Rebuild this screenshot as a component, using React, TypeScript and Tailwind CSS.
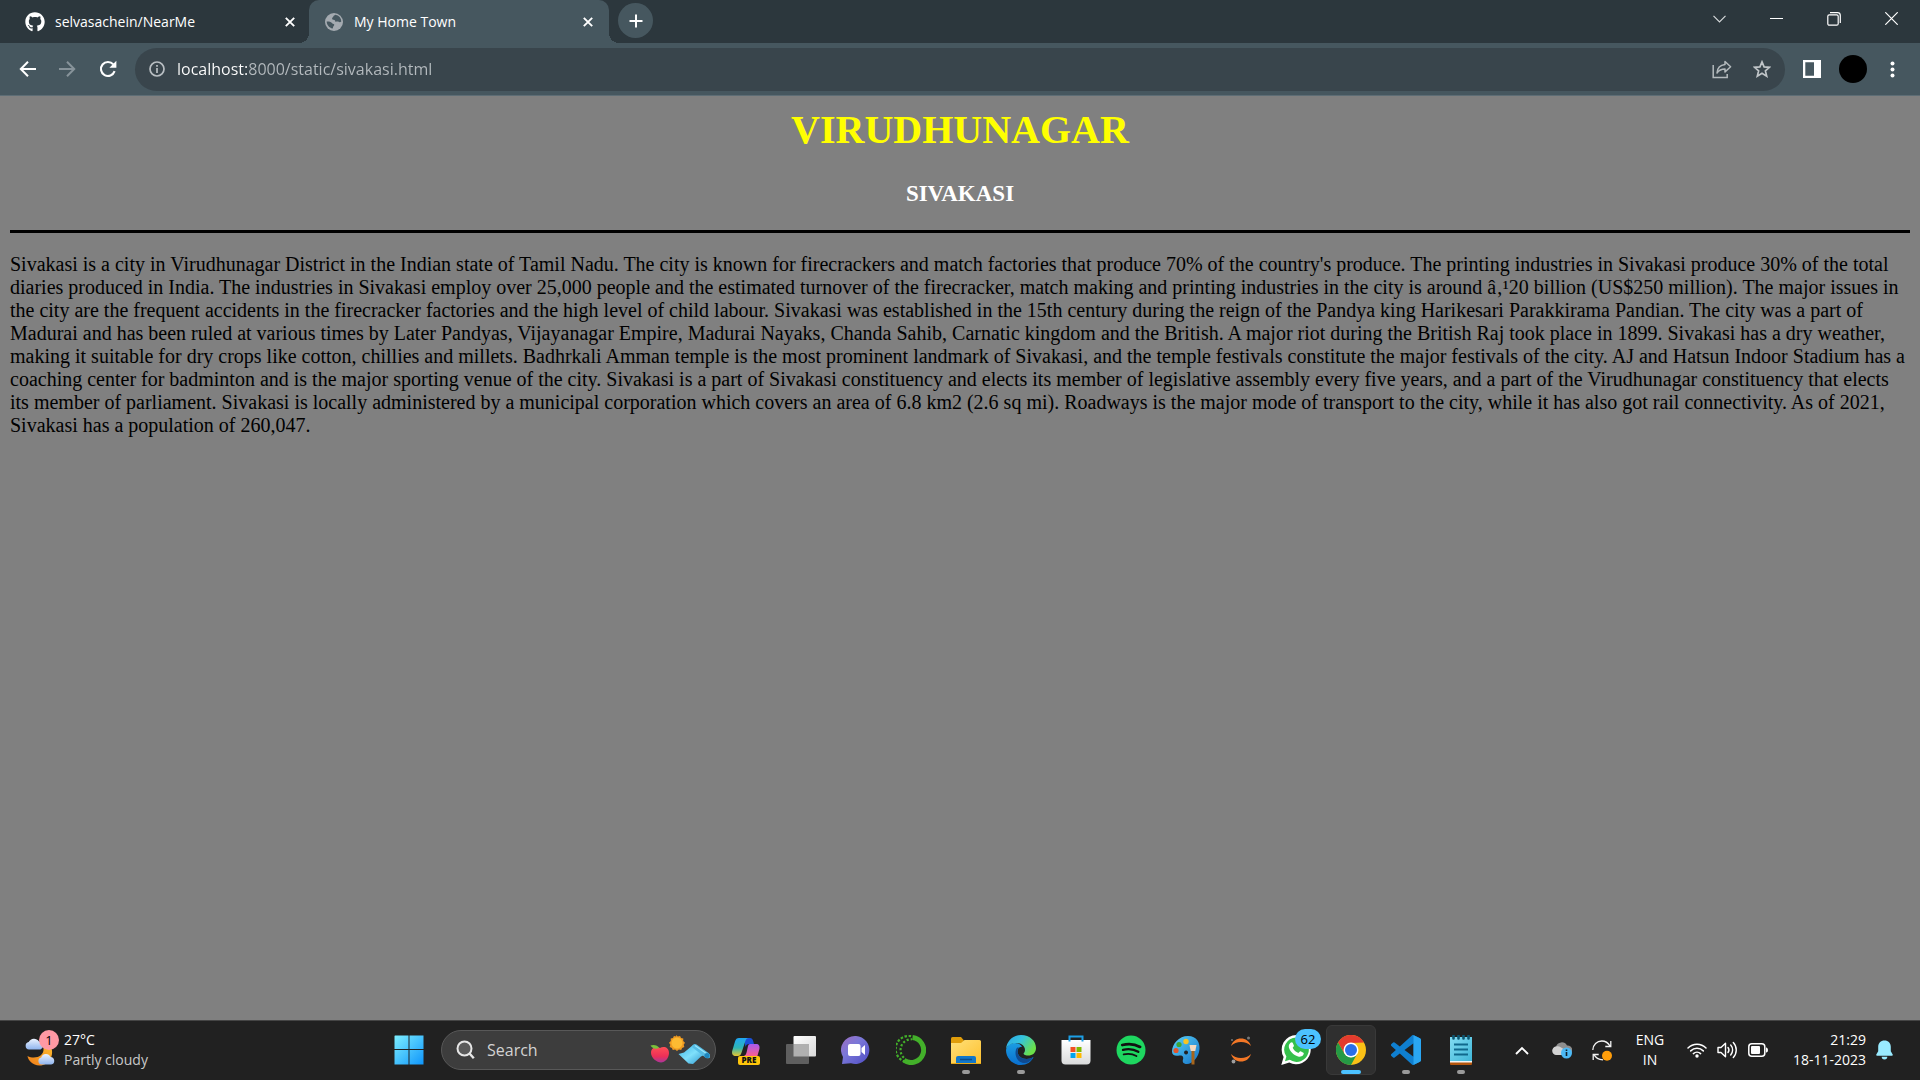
import React from "react";
import type { ReactNode } from "react";
import { FaGithub } from "react-icons/fa";

const PARAGRAPH =
  "Sivakasi is a city in Virudhunagar District in the Indian state of Tamil Nadu. The city is known for firecrackers and match factories that produce 70% of the country's produce. The printing industries in Sivakasi produce 30% of the total diaries produced in India. The industries in Sivakasi employ over 25,000 people and the estimated turnover of the firecracker, match making and printing industries in the city is around \u00e2\u201a\u00b920 billion (US$250 million). The major issues in the city are the frequent accidents in the firecracker factories and the high level of child labour. Sivakasi was established in the 15th century during the reign of the Pandya king Harikesari Parakkirama Pandian. The city was a part of Madurai and has been ruled at various times by Later Pandyas, Vijayanagar Empire, Madurai Nayaks, Chanda Sahib, Carnatic kingdom and the British. A major riot during the British Raj took place in 1899. Sivakasi has a dry weather, making it suitable for dry crops like cotton, chillies and millets. Badhrkali Amman temple is the most prominent landmark of Sivakasi, and the temple festivals constitute the major festivals of the city. AJ and Hatsun Indoor Stadium has a coaching center for badminton and is the major sporting venue of the city. Sivakasi is a part of Sivakasi constituency and elects its member of legislative assembly every five years, and a part of the Virudhunagar constituency that elects its member of parliament. Sivakasi is locally administered by a municipal corporation which covers an area of 6.8 km2 (2.6 sq mi). Roadways is the major mode of transport to the city, while it has also got rail connectivity. As of 2021, Sivakasi has a population of 260,047.";

/* ---------- Browser icons ---------- */

function CloseGlyph() {
  return (
    <svg width="10" height="10" viewBox="0 0 10 10" fill="none" stroke="#fff" strokeWidth="1.9">
      <path d="M.8.8l8.4 8.4M9.2.8L.8 9.2" />
    </svg>
  );
}

function GlobeIcon() {
  return (
    <svg width="18" height="18" viewBox="0 0 18 18">
      <circle cx="9" cy="9" r="9" fill="#a4aab0" />
      <path
        d="M10.3 1.8c-.7.8-1.9.7-2 1.8 0 .9-1 .8-1.2 1.6-.2.9.5 1.5 1.5 1.6 1.3.2 1.8.9 1.7 1.9 1.3.1 2.5-.5 3.3.1.7.6 2 .4 2.7-.2A7.3 7.3 0 0 0 10.3 1.8zM1.7 8.6c1.2.1 2.9 0 4.200.6 1.300.6 1.300 1.600 2.600 1.700 1.100.2.9 1.300.1 2-.8.8-.4 1.800-1 2.700-3.400-.7-5.900-3.500-5.900-7z"
        fill="#46575f"
      />
    </svg>
  );
}

function Arrow({ dim = false }: { dim?: boolean }) {
  return (
    <svg
      width="18"
      height="18"
      viewBox="0 0 18 18"
      fill="none"
      stroke={dim ? "#87939a" : "#fff"}
      strokeWidth="2"
      className={dim ? "rotate-180" : ""}
    >
      <path d="M17 9H2.500M9 1.800L1.800 9 9 16.200" />
    </svg>
  );
}

function ReloadIcon() {
  return (
    <svg width="18" height="18" viewBox="0 0 18 18">
      <path d="M15.600 11.200A7 7 0 1 1 14.300 4.400" fill="none" stroke="#fff" strokeWidth="2.100" />
      <path d="M17.400.8v7h-7z" fill="#fff" />
    </svg>
  );
}

function InfoIcon() {
  return (
    <svg width="16" height="16" viewBox="0 0 16 16" fill="none" stroke="#b9bfc3" strokeWidth="1.700">
      <circle cx="8" cy="8" r="7" />
      <path d="M8 7v5M8 4v1.800" />
    </svg>
  );
}

function ShareIcon() {
  return (
    <svg width="20" height="19" viewBox="0 0 20 19" fill="none" stroke="#b4babd" strokeWidth="1.500">
      <path d="M1.200 5v12.600h14V14" />
      <path d="M13 1.500l5.600 5.300L13 12V9C9.500 9 7 10 5 13c.3-4.500 3-8 8-8.500z" strokeLinejoin="round" />
    </svg>
  );
}

function StarIcon() {
  return (
    <svg width="18" height="18" viewBox="0 0 18 18" fill="none" stroke="#c0c5c8" strokeWidth="1.700">
      <path d="M9 1.900l2.100 5 5.400.4-4.100 3.600 1.300 5.300L9 13.300l-4.700 2.900 1.300-5.300-4.100-3.600 5.400-.4z" />
    </svg>
  );
}

function SidePanelIcon() {
  return (
    <svg width="18" height="18" viewBox="0 0 18 18">
      <path d="M0 0h18v18H0zM2.300 2.300v13.400H11V2.300z" fill="#fff" fillRule="evenodd" />
    </svg>
  );
}

/* ---------- Taskbar icons ---------- */

function WeatherIcon() {
  return (
    <svg width="30" height="28" viewBox="0 0 30 28">
      <defs>
        <linearGradient id="cloud" x1="0" y1="0" x2="0" y2="1">
          <stop offset="0" stopColor="#eaf2fe" />
          <stop offset="1" stopColor="#8fb4ee" />
        </linearGradient>
        <linearGradient id="moon" x1="1" y1="0" x2="0" y2="1">
          <stop offset="0" stopColor="#fdb92e" />
          <stop offset="1" stopColor="#ef7d1a" />
        </linearGradient>
      </defs>
      <path d="M26 9c3.500 8-1.500 18.500-11.500 18.500C7.500 27.500 3 22 2.500 18 9 21.500 19.500 19 18.500 10z" fill="url(#moon)" />
      <path d="M4 11.500a3.800 3.800 0 0 1-.3-7.500A6 6 0 0 1 14 3.500a4.200 4.200 0 0 1 1.500 8z" fill="url(#cloud)" />
      <path d="M16.500 26.500a3.500 3.500 0 0 1-.3-6.900 5 5 0 0 1 9.300-.6 3.800 3.800 0 0 1 .8 7.500z" fill="url(#cloud)" />
    </svg>
  );
}

function StartIcon() {
  return (
    <svg width="30" height="30" viewBox="0 0 30 30">
      <defs>
        <linearGradient id="start" x1="0" y1="0" x2="30" y2="30" gradientUnits="userSpaceOnUse">
          <stop offset="0" stopColor="#7ff0ff" />
          <stop offset="1" stopColor="#0d94fb" />
        </linearGradient>
      </defs>
      <path d="M1 .5h13.500V14H.5V1zM15.500.5h14V14h-14zM.5 15h14v14.500H.5zM15.500 15h14v14.500h-14z" fill="url(#start)" />
    </svg>
  );
}

function SearchIcon() {
  return (
    <svg width="19" height="20" viewBox="0 0 19 20" fill="none" stroke="#e6e6e6" strokeWidth="2">
      <circle cx="8.500" cy="8.500" r="7" fill="#5a5a5a" />
      <path d="M13.300 13.300l4.500 5" strokeWidth="2.400" />
    </svg>
  );
}

function SearchArt() {
  return (
    <svg width="60" height="30" viewBox="0 0 60 30">
      <defs>
        <linearGradient id="apple" x1="0" y1="0" x2="0" y2="1">
          <stop offset="0" stopColor="#ff4f55" />
          <stop offset=".6" stopColor="#ee2f57" />
          <stop offset="1" stopColor="#a8369b" />
        </linearGradient>
        <linearGradient id="mat" x1="0" y1="0" x2="1" y2="1">
          <stop offset="0" stopColor="#3db2e3" />
          <stop offset=".5" stopColor="#7fe0fb" />
          <stop offset="1" stopColor="#2a93cc" />
        </linearGradient>
      </defs>
      <path d="M10 13c3-2 9-1.500 9 5 0 5-4 9.500-8 9.500S1 23 1 18c0-6 6-7 9-5z" fill="url(#apple)" />
      <path d="M9 13C8 10.500 4 9 .5 10.500c1.500 3 5 4 8.500 2.500z" fill="#79c23c" />
      <path
        d="M26 0l1.800 1.600 2.300-.7.900 2.200 2.300.5-.1 2.300L35 7.700l-1.300 2 .6 2.300-2.200.9-.9 2.200-2.300-.5L27 16l-1.900-1.400-2.300.5-.9-2.200-2.200-.9.6-2.300L19 7.700l1.800-1.800-.1-2.300 2.300-.5.900-2.200 2.300.7z"
        fill="#ef9a21"
      />
      <circle cx="27" cy="8" r="5.500" fill="#fdbb32" />
      <path d="M28.500 19l5.500-1.500L43 10l12 9.500-4 2-8 7.500-4.500-.5z" fill="url(#mat)" />
      <path d="M42.500 12.500c-1-3 2-4.500 4-3l12 8.500c3.500 2.800 1.500 6.500-2.500 5z" fill="#55bce4" />
      <path d="M45 10.500l12 8.500" stroke="#9be6fb" strokeWidth="1.200" />
      <circle cx="57" cy="20.500" r="2.600" fill="#1f86bd" />
    </svg>
  );
}

function CopilotIcon() {
  return (
    <svg width="30" height="30" viewBox="0 0 30 30">
      <defs>
        <linearGradient id="cpa" x1="0" y1="0" x2="0" y2="1">
          <stop offset="0" stopColor="#1fa6f3" />
          <stop offset=".55" stopColor="#2fb6b4" />
          <stop offset="1" stopColor="#e8c52d" />
        </linearGradient>
        <linearGradient id="cpb" x1="0" y1="0" x2="0" y2="1">
          <stop offset="0" stopColor="#a75af0" />
          <stop offset="1" stopColor="#fa5f8f" />
        </linearGradient>
      </defs>
      <path d="M13 3h6c2 0 2.700 1.500 3.300 3.500L23 9h-5c-2 0-3 1-3.500 3z" fill="#1a50d8" />
      <path d="M8 3h10c-2 0-3 1-3.600 3l-4 12c-.6 2-1.600 3-3.600 3H5c-3 0-4.500-2-3.800-5L4 6.500C4.700 4 6 3 8 3z" fill="url(#cpa)" />
      <path d="M19 9h6c3 0 4 2 3.400 5l-2 7H13l1-.8c1-.5 1.200-1.700 1.700-3.200L17 11c.4-1.300 1-2 2-2z" fill="url(#cpb)" />
      <rect x="7" y="21" width="22" height="9" rx="2" fill="#ffc60b" />
      <text x="18" y="28.300" textAnchor="middle" fontFamily="Open Sans, sans-serif" fontWeight="800" fontSize="8" fill="#111">
        PRE
      </text>
    </svg>
  );
}

function TaskViewIcon() {
  return (
    <svg width="30" height="30" viewBox="0 0 30 30">
      <defs>
        <linearGradient id="tv" x1="0" y1="0" x2="1" y2="1">
          <stop offset="0" stopColor="#fff" />
          <stop offset="1" stopColor="#d9d9d9" />
        </linearGradient>
      </defs>
      <rect x="7.500" y="1" width="22.500" height="20.500" rx="1" fill="url(#tv)" />
      <rect x="0" y="9" width="23" height="20" rx="1" fill="#5f5f5f" />
      <rect x="7.500" y="9" width="15.500" height="12.500" fill="#b0b0b0" />
    </svg>
  );
}

function ChatIcon() {
  return (
    <svg width="30" height="30" viewBox="0 0 30 30">
      <defs>
        <linearGradient id="chat" x1="0" y1="0" x2="1" y2="1">
          <stop offset="0" stopColor="#a06cc0" />
          <stop offset=".4" stopColor="#7b78d8" />
          <stop offset="1" stopColor="#4e4cc4" />
        </linearGradient>
      </defs>
      <path d="M15 1a14 14 0 1 1-5 27.300L1 29l1-7A14 14 0 0 1 15 1z" fill="url(#chat)" />
      <rect x="7" y="9" width="12.500" height="12" rx="2" fill="#fff" />
      <path d="M20.500 13l3.500-3v10l-3.500-3z" fill="#fff" />
    </svg>
  );
}

function AnacondaIcon() {
  return (
    <svg width="30" height="30" viewBox="0 0 30 30" fill="none" stroke="#43b02a">
      <path d="M16.500 2.600A12.500 12.500 0 1 1 8 25.300" strokeWidth="5" />
      <path d="M9 26.600A13 13 0 0 1 16.500 1.500" strokeWidth="2.200" strokeDasharray="2.500 1.600" />
      <path d="M9.500 24A10.700 10.700 0 0 1 16 4.300" strokeWidth="2.200" strokeDasharray="2.200 1.900" strokeDashoffset="2" />
    </svg>
  );
}

function ExplorerIcon() {
  return (
    <svg width="30" height="30" viewBox="0 0 30 30">
      <defs>
        <linearGradient id="fold" x1="0" y1="0" x2="1" y2="1">
          <stop offset="0" stopColor="#ffe07a" />
          <stop offset="1" stopColor="#fdc02d" />
        </linearGradient>
      </defs>
      <path d="M0 3.500Q0 2 1.500 2H10l3 3.500V12H0z" fill="#e09d0b" />
      <path d="M0 8h10l3.500-3H28.500Q30 5 30 6.500V29H0z" fill="url(#fold)" />
      <path d="M5 29v-6q0-2 2-2h16q2 0 2 2v6z" fill="#1277c9" />
      <path d="M9 24.500h12" stroke="#0b4d8c" strokeWidth="1.500" />
      <path d="M0 28.500h30" stroke="#e9a915" strokeWidth="1" />
    </svg>
  );
}

function EdgeIcon() {
  return (
    <svg width="30" height="30" viewBox="0 0 30 30">
      <defs>
        <linearGradient id="ea" x1="0" y1="0" x2="1" y2=".5">
          <stop offset="0" stopColor="#2aa5e8" />
          <stop offset=".5" stopColor="#35c3dc" />
          <stop offset="1" stopColor="#6be04a" />
        </linearGradient>
        <linearGradient id="eb" x1="0" y1="0" x2="0" y2="1">
          <stop offset="0" stopColor="#1b9de2" />
          <stop offset="1" stopColor="#0a6fcf" />
        </linearGradient>
      </defs>
      <path d="M0 15C1 10 5 8 9 8c3 0 6 1.500 7 4-3 0-4.500 2-4.500 4.500 0 4 4 7.500 9 7.500 3 0 5-1 7-2C25.500 27 20.500 30 15 30 7 30 0 23.500 0 15z" fill="url(#eb)" />
      <path d="M10 14.500c.5-1.500 1.700-2.300 3-2.500-1 1-1.500 2.500-1.500 4.500 0 4 4 7.500 9 7.500 3 0 5-1 7-2C25 26 22 28 18.500 28 12.500 28 8 21.500 10 14.500z" fill="#0f4a91" />
      <path d="M0 14C.7 6 7 0 15 0c9 0 15 6 15 13 0 5-3.500 7.500-8 7.500-3.500 0-4.500-1.300-4.500-2.500s1.300-1.500 1.300-4c0-2.500-3-6-8.300-6C5 8 1 11 0 14z" fill="url(#ea)" />
      <circle cx="15.500" cy="15.500" r="3.300" fill="#212121" />
    </svg>
  );
}

function StoreIcon() {
  return (
    <svg width="30" height="30" viewBox="0 0 30 30">
      <defs>
        <linearGradient id="bag" x1="0" y1="0" x2="0" y2="1">
          <stop offset="0" stopColor="#fff" />
          <stop offset="1" stopColor="#d9dadb" />
        </linearGradient>
      </defs>
      <path d="M.5 5h29v20.500a4 4 0 0 1-4 4h-21a4 4 0 0 1-4-4z" fill="url(#bag)" />
      <path d="M8.500 6.500v-5h13v5" fill="none" stroke="#1c9fe6" strokeWidth="2" />
      <path d="M9.500 12h5v5h-5z" fill="#f25022" />
      <path d="M15.500 12h5v5h-5z" fill="#7fba00" />
      <path d="M9.500 18h5v5h-5z" fill="#00a4ef" />
      <path d="M15.500 18h5v5h-5z" fill="#ffb900" />
    </svg>
  );
}

function SpotifyIcon() {
  return (
    <svg width="30" height="30" viewBox="0 0 30 30" fill="none" stroke="#111" strokeLinecap="round">
      <circle cx="15" cy="15" r="14.500" fill="#1ed760" stroke="none" />
      <path d="M6.300 10c6-1.600 12.500-1 17.800 1.900" strokeWidth="2.800" />
      <path d="M7 14.900c5.300-1.400 10.700-.8 15.300 1.900" strokeWidth="2.300" />
      <path d="M7.700 19.400c4.500-1.100 8.800-.6 12.700 1.600" strokeWidth="1.900" />
    </svg>
  );
}

function PaintIcon() {
  return (
    <svg width="30" height="30" viewBox="0 0 30 30">
      <defs>
        <linearGradient id="pal" x1="0" y1="0" x2="1" y2="1">
          <stop offset="0" stopColor="#5ad2f8" />
          <stop offset="1" stopColor="#1573c8" />
        </linearGradient>
      </defs>
      <path
        d="M17 1C26 1 29 8 28.500 14c-.5 8-7 15-12.500 15-3 0-5-1.500-4-4.500s-1-4.500-3.500-4c-4 1-7.500 0-7.500-4C1 9 8 1 17 1zm-2 14.500a2 2 0 1 0 .1 0z"
        fill="url(#pal)"
        fillRule="evenodd"
      />
      <circle cx="15" cy="6.500" r="2.700" fill="#f8c423" />
      <circle cx="8" cy="9.500" r="2.600" fill="#3ba536" />
      <circle cx="5" cy="15.500" r="2.600" fill="#e2562c" />
      <path d="M18.500 10h7l-1.200 6h-4.600z" fill="#f3d9c0" />
      <path d="M20.500 16h3v13.500h-3z" fill="#a8651b" />
    </svg>
  );
}

function JupyterIcon() {
  return (
    <svg width="24" height="30" viewBox="0 0 24 30">
      <path d="M2 11C3.500 6 7.500 3.500 12 3.500S20.500 6 22 11C19.500 8.300 16 7 12 7S4.500 8.300 2 11z" fill="#f37726" />
      <path d="M2 19c1.500 5 5.500 7.500 10 7.500s8.500-2.500 10-7.500c-2.500 2.700-6 4-10 4s-7.500-1.300-10-4z" fill="#f37726" />
      <circle cx="3" cy="5" r="1" fill="#767677" />
      <circle cx="19.500" cy="3" r="1.500" fill="#767677" />
      <circle cx="4.500" cy="26.500" r="1.900" fill="#9e9e9e" />
    </svg>
  );
}

function WhatsAppIcon() {
  return (
    <svg width="30" height="30" viewBox="0 0 30 30">
      <path d="M15.300 0a14.600 14.600 0 1 1-7 27.500L.3 30l2.300-8A14.700 14.700 0 0 1 15.300 0z" fill="#fff" />
      <path d="M15.300 2.500a12.200 12.200 0 1 1-6.500 22.300L4 26.300l1.400-4.700A12.200 12.200 0 0 1 15.300 2.500z" fill="#35c04b" />
      <path
        d="M9.500 7.800c.8-.9 1.900-.9 2.300.1l1.100 2.600c.3.700-.8 1.700-1.200 2.300 1.200 2.500 3 4.200 5.700 5.200.6-.4 1.500-2 2.200-1.700l2.800 1.400c.8.5.2 2-.6 2.800-1 1-2.800 1.500-4.700.9C12.300 20 8.800 16 7.900 12.500c-.4-1.900.3-3.500 1.600-4.700z"
        fill="#fff"
      />
    </svg>
  );
}

function ChromeIcon() {
  return (
    <svg width="30" height="30" viewBox="0 0 30 30">
      <circle cx="15" cy="15" r="15" fill="#fbc116" />
      <path d="M2 7.500A15 15 0 0 1 28 7.500L15 8 8.500 18.700z" fill="#e33b2e" />
      <path d="M2 7.500l6.500 11.200L15 22.500l6.200-3.800L15 30A15 15 0 0 1 2 7.500z" fill="#259a45" />
      <circle cx="15" cy="15" r="7.500" fill="#fff" />
      <circle cx="15" cy="15" r="6" fill="#2a6fe8" />
    </svg>
  );
}

function VsCodeIcon() {
  return (
    <svg width="30" height="30" viewBox="0 0 24 24">
      <path
        d="M23.150 2.587L18.210.21a1.494 1.494 0 0 0-1.705.29l-9.460 8.630-4.120-3.128a.999.999 0 0 0-1.276.057L.327 7.261A1 1 0 0 0 .326 8.740L3.899 12 .326 15.260a1 1 0 0 0 .001 1.479L1.650 17.940a.999.999 0 0 0 1.276.057l4.120-3.128 9.460 8.630a1.492 1.492 0 0 0 1.704.29l4.942-2.377A1.500 1.500 0 0 0 24 20.060V3.939a1.500 1.500 0 0 0-.85-1.352zm-5.146 14.861L10.826 12l7.178-5.448v10.896z"
        fill="#0f7fd0"
      />
      <path
        d="M18.004.15v23.700c.1 0 .2-.03.3-.06l4.846-2.377A1.500 1.500 0 0 0 24 20.060V3.939a1.500 1.500 0 0 0-.85-1.352L18.210.21z"
        fill="#2aa6f2"
      />
    </svg>
  );
}

function NotepadIcon() {
  return (
    <svg width="24" height="30" viewBox="0 0 24 30">
      <defs>
        <linearGradient id="note" x1="0" y1="0" x2="1" y2="1">
          <stop offset="0" stopColor="#83dcf2" />
          <stop offset="1" stopColor="#3fb6d8" />
        </linearGradient>
      </defs>
      <path d="M1 25h22v4q0 1-1 1H2q-1 0-1-1z" fill="#b4560d" />
      <path d="M1 25h22v2.500H1z" fill="#f4f4f4" />
      <path d="M1 2h22v24H1z" fill="url(#note)" />
      <path d="M5 9.500h14M5 14.500h14M5 19.500h14" stroke="#10688c" strokeWidth="1.800" />
      <path d="M4.500.500v3M9.500.500v3M14.500.500v3M19.500.500v3" stroke="#0d5570" strokeWidth="2.600" strokeLinecap="round" />
    </svg>
  );
}

function OneDriveIcon() {
  return (
    <svg width="20" height="18" viewBox="0 0 20 18">
      <path d="M4.500 14a4.300 4.300 0 0 1-.5-8.400A6 6 0 0 1 15 4.500a4.500 4.500 0 0 1 1 9.500z" fill="#8e8e8e" />
      <path d="M4.500 14a4.300 4.300 0 0 1 0-8.600C8 5 9.500 7 13 9l-2 5z" fill="#d2d2d2" />
      <circle cx="14.500" cy="12" r="5.500" fill="#4cb9f5" />
      <path d="M14.500 11v4M14.500 8.500v1.500" stroke="#10202b" strokeWidth="1.600" />
    </svg>
  );
}

function UpdateIcon() {
  return (
    <svg width="20" height="21" viewBox="0 0 20 21" fill="none" stroke="#f2f2f2" strokeWidth="1.300">
      <path d="M.8 10C1 4.500 5 1 9.800 1c3.500 0 6.500 2 8.200 5M18.800 1v5.500h-5.500" />
      <path d="M11 19.800c-4-.1-7.500-2-9-5.300M1.200 20v-5.500h5.500" />
      <circle cx="15" cy="15.800" r="5" fill="#ff9d0a" stroke="none" />
    </svg>
  );
}

function WifiIcon() {
  return (
    <svg width="20" height="16" viewBox="0 0 20 16" fill="none" stroke="#fff" strokeWidth="1.500" strokeLinecap="round">
      <path d="M1 6a12.700 12.700 0 0 1 18 0M3.700 8.900a9 9 0 0 1 12.600 0M6.400 11.600a5.200 5.200 0 0 1 7.200 0" />
      <circle cx="10" cy="14" r="1.700" fill="#fff" stroke="none" />
    </svg>
  );
}

function VolumeIcon() {
  return (
    <svg width="21" height="18" viewBox="0 0 21 18" fill="none" stroke="#fff" strokeWidth="1.400" strokeLinejoin="round" strokeLinecap="round">
      <path d="M1 6.500h3L8.500 2.300v13.400L4 11.500H1z" />
      <path d="M11 6.500a4 4 0 0 1 0 5M13.700 4a7.500 7.500 0 0 1 0 10M16.300 1.500a11 11 0 0 1 0 15" />
    </svg>
  );
}

function BatteryIcon() {
  return (
    <svg width="20" height="14" viewBox="0 0 20 14">
      <rect x=".8" y=".8" width="16" height="12.400" rx="3" fill="none" stroke="#fff" strokeWidth="1.500" />
      <rect x="3" y="3" width="9" height="8" rx="1" fill="#fff" />
      <path d="M18 4.500h.5q1.500.5 1.500 2.500t-1.500 2.500H18z" fill="#fff" />
    </svg>
  );
}

function BellIcon() {
  return (
    <svg width="17" height="20" viewBox="0 0 17 20" fill="#99ebff">
      <path d="M8.500.5c3.800 0 6.300 2.700 6.300 6.300v4.500l1.900 3.200q.4 1.300-.8 1.300H1.100q-1.200 0-.8-1.300l1.900-3.200V6.800C2.200 3.200 4.700.5 8.500.5z" />
      <path d="M5.700 16.800h5.600a2.800 2.600 0 0 1-5.600 0z" />
    </svg>
  );
}

/* ---------- Browser ---------- */

function TabStrip() {
  return (
    <header className="flex h-[43px] bg-[#2c373d] text-[14px] text-white">
      <div className="flex w-[309px] items-center pr-[10px] pl-[25px]">
        <FaGithub size={20} />
        <button className="ml-[10px] flex-1 pb-px text-left">selvasachein/NearMe</button>
        <button aria-label="Close tab" className="p-1">
          <CloseGlyph />
        </button>
      </div>
      <div className="relative flex w-[300px] items-center rounded-t-[10px] bg-[#46575f] pr-3 pl-4">
        <span className="absolute bottom-0 -left-[10px] size-[10px] bg-[radial-gradient(circle_at_0_0,transparent_10px,#46575f_10px)]" />
        <span className="absolute -right-[10px] bottom-0 size-[10px] bg-[radial-gradient(circle_at_100%_0,transparent_10px,#46575f_10px)]" />
        <GlobeIcon />
        <button className="ml-[11px] flex-1 pb-px text-left">My Home Town</button>
        <button aria-label="Close tab" className="p-1">
          <CloseGlyph />
        </button>
      </div>
      <button
        aria-label="New tab"
        className="mt-[3px] ml-[9px] flex size-[35px] items-center justify-center rounded-full bg-[#46575f]"
      >
        <svg width="14" height="14" viewBox="0 0 14 14" stroke="#fff" strokeWidth="2">
          <path d="M7 .5v13M.5 7h13" />
        </svg>
      </button>
      <div className="ml-auto flex h-[37px] items-center text-white">
        <button aria-label="Search tabs" className="flex w-[57px] justify-center">
          <svg width="13" height="8" viewBox="0 0 13 8" fill="none" stroke="#d5d8da" strokeWidth="1.200">
            <path d="M.5.8l6 6 6-6" />
          </svg>
        </button>
        <button aria-label="Minimize" className="flex w-[57px] justify-center">
          <svg width="13" height="2" viewBox="0 0 13 2">
            <path d="M0 0h13v1H0z" fill="#fff" />
          </svg>
        </button>
        <button aria-label="Restore" className="flex w-[57px] justify-center">
          <svg width="14" height="14" viewBox="0 0 14 14" fill="none" stroke="#fff" strokeWidth="1.200">
            <rect x=".8" y="2.800" width="10.400" height="10.400" rx="1.500" />
            <path d="M3 .7h7.500a2.800 2.800 0 0 1 2.800 2.800v7.500" />
          </svg>
        </button>
        <button aria-label="Close" className="flex w-[58px] justify-center">
          <svg width="13" height="13" viewBox="0 0 13 13" stroke="#fff" strokeWidth="1.200">
            <path d="M.3.3l12.400 12.400M12.700.3L.3 12.700" />
          </svg>
        </button>
      </div>
    </header>
  );
}

function Toolbar() {
  return (
    <nav className="flex h-[53px] items-center border-b border-[#5d6d75] bg-[#46575f] pr-5">
      <div className="flex w-[135px] items-center gap-[21px] pl-[19px]">
        <button aria-label="Back"><Arrow /></button>
        <button aria-label="Forward"><Arrow dim /></button>
        <button aria-label="Reload" className="ml-[2px]"><ReloadIcon /></button>
      </div>
      <div className="flex h-[43px] flex-1 items-center rounded-full bg-[#39454c] pr-[14px] pl-[14px]">
        <InfoIcon />
        <input
          aria-label="Address"
          defaultValue="localhost:8000/static/sivakasi.html"
          className="ml-3 flex-1 bg-[linear-gradient(to_right,#ffffff_72px,#b4babe_72px)] bg-clip-text text-[16px] text-transparent outline-none"
        />
        <button aria-label="Share" className="mr-[21px]"><ShareIcon /></button>
        <button aria-label="Bookmark"><StarIcon /></button>
      </div>
      <button aria-label="Side panel" className="ml-[18px]"><SidePanelIcon /></button>
      <button aria-label="Profile" className="ml-[18px] size-7 rounded-full bg-black" />
      <button aria-label="Menu" className="ml-[17px] flex w-4 justify-center">
        <svg width="5" height="17" viewBox="0 0 5 17" fill="#fff">
          <circle cx="2.500" cy="2.500" r="2" />
          <circle cx="2.500" cy="8.500" r="2" />
          <circle cx="2.500" cy="14.500" r="2" />
        </svg>
      </button>
    </nav>
  );
}

/* ---------- Taskbar ---------- */

type AppEntry = { name: string; icon: ReactNode; open?: boolean; active?: boolean; badge?: string };

const APPS: AppEntry[] = [
  { name: "Copilot", icon: <CopilotIcon /> },
  { name: "Task view", icon: <TaskViewIcon /> },
  { name: "Chat", icon: <ChatIcon /> },
  { name: "Anaconda", icon: <AnacondaIcon /> },
  { name: "File Explorer", icon: <ExplorerIcon />, open: true },
  { name: "Edge", icon: <EdgeIcon />, open: true },
  { name: "Microsoft Store", icon: <StoreIcon /> },
  { name: "Spotify", icon: <SpotifyIcon /> },
  { name: "Paint", icon: <PaintIcon /> },
  { name: "Jupyter", icon: <JupyterIcon /> },
  { name: "WhatsApp", icon: <WhatsAppIcon />, badge: "62" },
  { name: "Chrome", icon: <ChromeIcon />, open: true, active: true },
  { name: "Visual Studio Code", icon: <VsCodeIcon />, open: true },
  { name: "Notepad", icon: <NotepadIcon />, open: true },
];

function AppButton({ app }: { app: AppEntry }) {
  return (
    <button
      aria-label={app.name}
      className={
        app.active
          ? "relative flex size-[50px] items-center justify-center rounded-md border border-[#393939] bg-[#2f2f2f]"
          : "relative flex size-[50px] items-center justify-center"
      }
    >
      {app.icon}
      {app.badge && (
        <span className="absolute top-1 right-0 flex h-5 w-[26px] items-center justify-center rounded-full bg-[#4cc2ff] text-[13px] leading-5 text-black">
          {app.badge}
        </span>
      )}
      {app.open && (
        <span
          className={
            app.active
              ? "absolute bottom-0 h-1 w-5 rounded-full bg-[#4cc2ff]"
              : "absolute bottom-px h-1 w-2 rounded-full bg-[#9a9a9a]"
          }
        />
      )}
    </button>
  );
}

function Taskbar() {
  return (
    <footer className="flex h-[60px] items-center border-t border-[#454545] bg-[#212121] pb-px text-[14px] leading-5 text-white">
      <button className="flex w-[384px] items-center pl-[25px] text-left">
        <span className="relative mr-[9px] pt-1">
          <WeatherIcon />
          <span className="absolute -top-1 left-[14px] flex size-5 items-center justify-center rounded-full bg-[#ff99a4] text-[13px] text-black">
            1
          </span>
        </span>
        <span className="pb-px">
          <span className="block">27°C</span>
          <span className="block text-[#c8c8c8]">Partly cloudy</span>
        </span>
      </button>
      <button aria-label="Start" className="flex size-[50px] items-center justify-center">
        <StartIcon />
      </button>
      <label className="ml-[7px] flex h-10 w-[275px] items-center rounded-full border border-[#585858] bg-[#3d3d3d] pr-[5px] pl-[14px]">
        <SearchIcon />
        <input
          aria-label="Search"
          placeholder="Search"
          className="ml-3 w-0 flex-1 bg-transparent text-[16px] outline-none placeholder:text-[#d2d2d2]"
        />
        <SearchArt />
      </label>
      <div className="ml-[5px] flex gap-[5px]">
        {APPS.map((app) => (
          <AppButton key={app.name} app={app} />
        ))}
      </div>
      <div className="ml-auto flex items-center pr-[27px]">
        <button aria-label="Hidden icons" className="mr-[23px]">
          <svg width="14" height="9" viewBox="0 0 14 9" fill="none" stroke="#fff" strokeWidth="1.900">
            <path d="M1 8l6-6 6 6" />
          </svg>
        </button>
        <button aria-label="OneDrive" className="mr-5"><OneDriveIcon /></button>
        <button aria-label="Update" className="mr-[23px]"><UpdateIcon /></button>
        <button className="mr-[22px] w-[30px] text-center">
          <span className="-mx-2 block">ENG</span>
          <span className="-mx-2 block">IN</span>
        </button>
        <button aria-label="Quick settings" className="mr-5 flex items-center gap-[10px]">
          <WifiIcon />
          <VolumeIcon />
          <BatteryIcon />
        </button>
        <button className="mr-[10px] w-[78px] pb-px text-right">
          <span className="block">21:29</span>
          <span className="block">18-11-2023</span>
        </button>
        <button aria-label="Notifications"><BellIcon /></button>
      </div>
    </footer>
  );
}

export default function App() {
  return (
    <div className="flex min-h-screen flex-col bg-[#808080] font-['Open_Sans','Noto_Sans',sans-serif]">
      <TabStrip />
      <Toolbar />
      <main className="flex-1 px-[10px] pt-[11px] font-['Liberation_Serif','Times_New_Roman',serif] text-[20px] leading-[23px] text-black">
        <h1 className="text-center text-[40px] leading-[46px] font-bold text-[#ffff00]">VIRUDHUNAGAR</h1>
        <h3 className="mt-[27px] text-center text-[23px] leading-[27px] font-bold text-white">SIVAKASI</h3>
        <hr className="mt-[23px] border-t-[3px] border-black" />
        <p className="mt-5">{PARAGRAPH}</p>
      </main>
      <Taskbar />
    </div>
  );
}
